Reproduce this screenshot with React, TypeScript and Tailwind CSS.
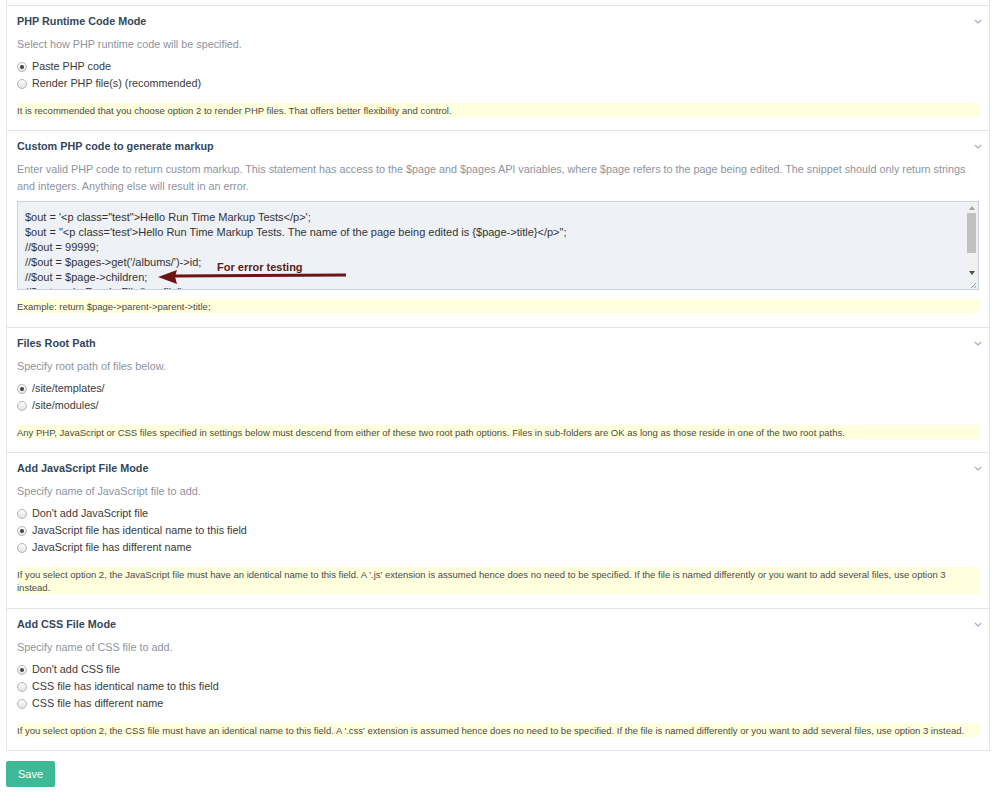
import React from "react";

const font = { fontFamily: '"Liberation Sans", Arial, sans-serif' };

const Chevron = () => (
  <svg width="8" height="5" viewBox="0 0 8 5" className="mt-[6px] mr-[-3px]">
    <path d="M0.7 0.8 L4 4 L7.3 0.8" fill="none" stroke="#9aa9c4" strokeWidth="1.1" />
  </svg>
);

const Radio = ({ label, checked }: { label: string; checked?: boolean }) => (
  <label className="flex items-center gap-[5px] h-[17px] text-[10.8px] text-[#3a3a3a]">
    <span className="w-[10px] h-[10px] rounded-full border border-[#b5b5b5] bg-gradient-to-b from-[#fdfdfd] to-[#e2e2e2] flex items-center justify-center">
      {checked && <span className="w-[4px] h-[4px] rounded-full bg-[#444]" />}
    </span>
    <span>{label}</span>
  </label>
);

const Note = ({ children }: { children: React.ReactNode }) => (
  <div className="bg-[#ffffdd] text-[9.5px] leading-[13px] py-[0.5px] text-[#4a4a4a]">{children}</div>
);

const Section = ({
  title,
  desc,
  children,
  note,
}: {
  title: string;
  desc: React.ReactNode;
  children: React.ReactNode;
  note: React.ReactNode;
}) => (
  <div className="border-t border-[#e1e6ed] px-[10px] pt-[7px] pb-[13px]">
    <div className="flex items-start justify-between">
      <h2 className="text-[10.8px] leading-[16px] font-bold text-[#33475b]">{title}</h2>
      <Chevron />
    </div>
    <div className="mt-[7px] text-[10.8px] leading-[17px] text-[#8d939e]">{desc}</div>
    {children}
    {note}
  </div>
);

const codeLines = [
  `$out = '<p class="test">Hello Run Time Markup Tests</p>';`,
  `$out = "<p class='test'>Hello Run Time Markup Tests. The name of the page being edited is {$page->title}</p>";`,
  `//$out = 99999;`,
  `//$out = $pages->get('/albums/')->id;`,
  `//$out = $page->children;`,
  `//$out = wireRenderFile('my-file');`,
];

const CodeBox = () => (
  <div className="relative mt-[6px] h-[89px] border border-[#c9d1dd] bg-[#eef1f6] flex overflow-hidden">
    <div className="flex-1 overflow-hidden pl-[7px] pt-[8px] text-[11px] leading-[15px] text-[#333]">
      {codeLines.map((l, i) => (
        <div key={i} className="whitespace-pre">
          {l}
        </div>
      ))}
    </div>
    <div className="w-[11px] mr-[1px] flex flex-col bg-[#f1f1f1]">
      <div className="h-[11px] flex items-center justify-center">
        <svg width="6" height="4" viewBox="0 0 6 4">
          <path d="M0 4 L3 0 L6 4 Z" fill="#a3a3a3" />
        </svg>
      </div>
      <div className="mx-[1px] h-[40px] bg-[#c1c1c1]" />
      <div className="flex-1" />
      <div className="h-[11px] flex items-center justify-center">
        <svg width="6" height="4" viewBox="0 0 6 4">
          <path d="M0 0 L3 4 L6 0 Z" fill="#505050" />
        </svg>
      </div>
      <div className="h-[11px] bg-[#eef1f6] flex items-end justify-end">
        <svg width="8" height="8" viewBox="0 0 8 8">
          <path d="M7 2 L2 7 M7 5 L5 7" stroke="#9a9a9a" strokeWidth="1" />
        </svg>
      </div>
    </div>
    {/* annotation overlay */}
    <svg className="absolute left-0 top-0 pointer-events-none" width="360" height="88">
      <path d="M155 74 L328 73" stroke="#6c1416" strokeWidth="3" />
      <path d="M140 75 L159 68 L157 74.5 L159 82 Z" fill="#6c1416" />
    </svg>
    <span className="absolute left-[199px] top-[57px] text-[11px] leading-[16px] font-bold text-[#5a1c16]">
      For error testing
    </span>
  </div>
);

export default function App() {
  return (
    <div className="min-h-[801px] bg-white px-[6px]" style={font}>
      <div className="border-x border-b border-[#e1e6ed] w-[984px]">
        <div className="h-[5px]" />
        <Section
          title="PHP Runtime Code Mode"
          desc="Select how PHP runtime code will be specified."
          note={
            <div className="mt-[11px]">
              <Note>It is recommended that you choose option 2 to render PHP files. That offers better flexibility and control.</Note>
            </div>
          }
        >
          <div className="mt-[5px]">
            <Radio label="Paste PHP code" checked />
            <Radio label="Render PHP file(s) (recommended)" />
          </div>
        </Section>
        <Section
          title="Custom PHP code to generate markup"
          desc={
            <>
              <span className="whitespace-nowrap">
                Enter valid PHP code to return custom markup. This statement has access to the $page and $pages API variables, where $page refers to the page being edited. The snippet should only return strings
              </span>
              <br />
              and integers. Anything else will result in an error.
            </>
          }
          note={
            <div className="mt-[9px] mb-[1px]">
              <Note>Example: return $page-&gt;parent-&gt;parent-&gt;title;</Note>
            </div>
          }
        >
          <CodeBox />
        </Section>
        <Section
          title="Files Root Path"
          desc="Specify root path of files below."
          note={
            <div className="mt-[11px]">
              <Note>
                Any PHP, JavaScript or CSS files specified in settings below must descend from either of these two root path options. Files in sub-folders are OK as long as those reside in one of the two root paths.
              </Note>
            </div>
          }
        >
          <div className="mt-[5px]">
            <Radio label="/site/templates/" checked />
            <Radio label="/site/modules/" />
          </div>
        </Section>
        <Section
          title="Add JavaScript File Mode"
          desc="Specify name of JavaScript file to add."
          note={
            <div className="mt-[11px] mb-[1px]">
              <Note>
                <span className="whitespace-nowrap">
                  If you select option 2, the JavaScript file must have an identical name to this field. A '.js' extension is assumed hence does no need to be specified. If the file is named differently or you want to add several files, use option 3
                </span>
                <br />
                instead.
              </Note>
            </div>
          }
        >
          <div className="mt-[5px]">
            <Radio label="Don't add JavaScript file" />
            <Radio label="JavaScript file has identical name to this field" checked />
            <Radio label="JavaScript file has different name" />
          </div>
        </Section>
        <Section
          title="Add CSS File Mode"
          desc="Specify name of CSS file to add."
          note={
            <div className="mt-[11px]">
              <Note>
                <span className="whitespace-nowrap">
                  If you select option 2, the CSS file must have an identical name to this field. A '.css' extension is assumed hence does no need to be specified. If the file is named differently or you want to add several files, use option 3 instead.
                </span>
              </Note>
            </div>
          }
        >
          <div className="mt-[5px]">
            <Radio label="Don't add CSS file" checked />
            <Radio label="CSS file has identical name to this field" />
            <Radio label="CSS file has different name" />
          </div>
        </Section>
      </div>
      <button className="mt-[10px] w-[49px] h-[26px] rounded-[2px] bg-[#3eb998] text-white text-[11px]">
        Save
      </button>
    </div>
  );
}
